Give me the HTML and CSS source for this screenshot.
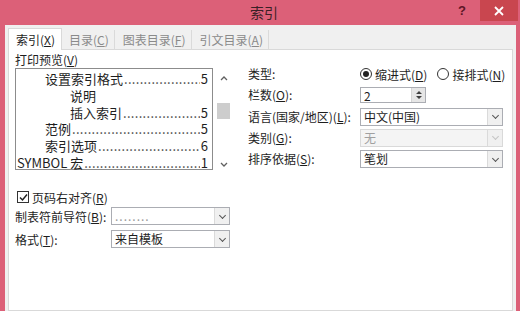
FILE: index.html
```html
<!DOCTYPE html>
<html lang="zh-CN">
<head>
    <meta charset="UTF-8">
    <title>索引</title>
    <link rel="stylesheet" href="styles.css">
</head>
<body>
    <div class="window">
        <div class="titlebar">
            <span class="caption">索引</span>
            <span class="help">?</span>
            <span class="close">
                <svg width="10" height="10" viewBox="0 0 10 10"><path d="M1 1L9 9M9 1L1 9" stroke="#fff" stroke-width="1.8"/></svg>
            </span>
        </div>
        <div class="frame">
            <div class="tabs">
                <div class="tab active">索引(<u>X</u>)</div>
                <div class="tab">目录(<u>C</u>)</div>
                <div class="tab">图表目录(<u>F</u>)</div>
                <div class="tab">引文目录(<u>A</u>)</div>
            </div>
            <div class="panel">
                <div class="top">
                    <div class="preview-col">
                        <div class="label">打印预览(<u>V</u>)</div>
                        <div class="preview">
                            <div class="list">
                                <div class="entry lvl1"><span>设置索引格式</span><span class="dots"></span><span>5</span></div>
                                <div class="entry lvl2"><span>说明</span></div>
                                <div class="entry lvl2"><span>插入索引</span><span class="dots"></span><span>5</span></div>
                                <div class="entry lvl1"><span>范例</span><span class="dots"></span><span>5</span></div>
                                <div class="entry lvl1"><span>索引选项</span><span class="dots"></span><span>6</span></div>
                                <div class="entry"><span>SYMBOL 宏</span><span class="dots"></span><span>1</span></div>
                            </div>
                            <div class="scrollbar">
                                <svg width="8" height="5" viewBox="0 0 8 5"><path d="M1 4L4 1L7 4" fill="none" stroke="#606060" stroke-width="1.3"/></svg>
                                <div class="thumb"></div>
                                <svg width="8" height="5" viewBox="0 0 8 5"><path d="M1 1L4 4L7 1" fill="none" stroke="#606060" stroke-width="1.3"/></svg>
                            </div>
                        </div>
                    </div>
                    <div class="options">
                        <div class="label">类型:</div>
                        <div class="radios">
                            <span class="radio checked"></span><span>缩进式(<u>D</u>)</span>
                            <span class="radio"></span><span>接排式(<u>N</u>)</span>
                        </div>

                        <div class="label">栏数(<u>O</u>):</div>
                        <div class="spin">
                            <span class="value">2</span>
                            <span class="spin-btn">
                                <svg width="6" height="10" viewBox="0 0 6 10"><path d="M0 4L3 1L6 4ZM0 6L3 9L6 6Z" fill="#404040"/></svg>
                            </span>
                        </div>

                        <div class="label">语言(国家/地区)(<u>L</u>):</div>
                        <div class="select"><span class="value">中文(中国)</span><span class="drop"></span></div>

                        <div class="label">类别(<u>G</u>):</div>
                        <div class="select disabled"><span class="value">无</span><span class="drop"></span></div>

                        <div class="label">排序依据(<u>S</u>):</div>
                        <div class="select"><span class="value">笔划</span><span class="drop"></span></div>
                    </div>
                </div>

                <div class="check-row">
                    <span class="checkbox">
                        <svg width="9" height="9" viewBox="0 0 9 9"><path d="M1 4.5L3.5 7L8 1.5" fill="none" stroke="#222" stroke-width="1.5"/></svg>
                    </span>
                    <span>页码右对齐(<u>R</u>)</span>
                </div>
                <div class="bottom">
                    <div class="label">制表符前导符(<u>B</u>):</div>
                    <div class="select"><span class="value leader">........</span><span class="drop"></span></div>
                    <div class="label">格式(<u>T</u>):</div>
                    <div class="select"><span class="value">来自模板</span><span class="drop"></span></div>
                </div>
            </div>
        </div>
    </div>
</body>
</html>
```

FILE: styles.css
```css
* {
    box-sizing: border-box;
}

body {
    margin: 0;
    width: 520px;
    height: 311px;
    overflow: hidden;
    font-family: "Noto Sans CJK SC", "Noto Sans", sans-serif;
    font-size: 12px;
    color: #1e1e1e;
}

u {
    text-decoration: underline;
    text-underline-offset: 1px;
}

.window {
    height: 311px;
    display: flex;
    flex-direction: column;
    background-color: #dc6078;
    padding: 0 4px 0 5px;
}

.titlebar {
    height: 25px;
    position: relative;
    flex-shrink: 0;
    color: #3a2026;
}

.caption {
    position: absolute;
    left: 245px;
    top: 3px;
    font-size: 14px;
    line-height: 18px;
    color: #3a2026;
}

.help {
    position: absolute;
    left: 453px;
    top: 3px;
    font-family: "Liberation Sans", sans-serif;
    font-weight: bold;
    font-size: 13px;
    color: #5c1526;
}

.close {
    position: absolute;
    right: -2px;
    top: 0;
    width: 38px;
    height: 21px;
    background-color: #c9464f;
    display: flex;
    align-items: center;
    justify-content: center;
}

.frame {
    flex: 1;
    background-color: #f0f0f0;
    padding: 3px 3px 0 3px;
    display: flex;
    flex-direction: column;
}

.tabs {
    display: flex;
    align-items: flex-end;
    height: 22px;
    position: relative;
    z-index: 1;
}

.tab {
    height: 20px;
    line-height: 19px;
    padding: 0 5px 0 3px;
    color: #8a8a8a;
    border-right: 1px solid #dadada;
    margin-right: 5px;
    white-space: nowrap;
}

.tab.active {
    height: 22px;
    line-height: 22px;
    background-color: #fff;
    color: #1e1e1e;
    border: 1px solid #d9d9d9;
    border-bottom: none;
    padding: 0 6px 0 7px;
    margin-right: 4px;
}

.panel {
    flex: 1;
    background-color: #fff;
    border: 1px solid #d9d9d9;
    margin-top: -1px;
    padding: 3px 0 0 6px;
}

.top {
    display: flex;
}

.preview-col .label {
    line-height: 14px;
    margin-bottom: 1px;
}

.preview {
    display: flex;
}

.list {
    width: 198px;
    height: 102px;
    border: 1px solid #8c8c8c;
    padding: 2px 4px 0 1px;
    font-size: 13px;
}

.entry {
    display: flex;
    height: 16.8px;
    line-height: 16.8px;
    white-space: nowrap;
}

.entry.lvl1 {
    padding-left: 28px;
}

.entry.lvl2 {
    padding-left: 53px;
}

.dots {
    flex: 1;
    overflow: hidden;
    margin: 0 1px;
    color: #444;
}

.dots::before {
    content: "..........................................................................";
    letter-spacing: 0.3px;
}

.scrollbar {
    width: 19px;
    height: 102px;
    display: flex;
    flex-direction: column;
    align-items: center;
    justify-content: space-between;
    padding: 8px 0 3px 2px;
}

.thumb {
    width: 13px;
    height: 16px;
    background-color: #cdcdcd;
    margin-top: -22px;
}

.options {
    margin-left: 16px;
    margin-top: 12px;
    width: 255px;
    display: grid;
    grid-template-columns: 112px 143px;
    grid-auto-rows: 18px;
    row-gap: 3.3px;
    align-items: center;
}

.options .label {
    line-height: 18px;
}

.radios {
    display: flex;
    align-items: center;
    white-space: nowrap;
}

.radio {
    flex-shrink: 0;
    width: 12px;
    height: 12px;
    border: 1px solid #333;
    border-radius: 50%;
    margin-right: 3px;
    display: flex;
    align-items: center;
    justify-content: center;
}

.radio + span {
    margin-right: 10px;
}

.radio.checked::after {
    content: "";
    width: 6px;
    height: 6px;
    border-radius: 50%;
    background-color: #222;
}

.spin {
    width: 66px;
    height: 16px;
    border: 1px solid #abadb3;
    display: flex;
    justify-content: space-between;
    align-items: center;
    padding-left: 3px;
}

.spin-btn {
    width: 14px;
    height: 14px;
    background-color: #e6e6e6;
    border-left: 1px solid #d4d4d4;
    display: flex;
    align-items: center;
    justify-content: center;
}

.select {
    height: 18px;
    border: 1px solid #abadb3;
    display: flex;
    justify-content: space-between;
    align-items: center;
    padding-left: 3px;
    background-color: #fff;
}

.select .value {
    line-height: 16px;
}

.drop {
    width: 15px;
    height: 16px;
    background-color: #f0f0f0;
    border-left: 1px solid #dadada;
    display: flex;
    align-items: center;
    justify-content: center;
}

.drop::after {
    content: "";
    width: 4px;
    height: 4px;
    border-right: 1.5px solid #555;
    border-bottom: 1.5px solid #555;
    transform: translateY(-1px) rotate(45deg);
}

.select.disabled {
    background-color: #f4f4f4;
    border-color: #d9d9d9;
    color: #a0a0a0;
}

.select.disabled .drop::after {
    border-color: #c4c4c4;
}

.check-row {
    display: flex;
    align-items: center;
    margin-top: 20px;
    margin-left: 2px;
    height: 14px;
}

.checkbox {
    flex-shrink: 0;
    width: 12px;
    height: 12px;
    border: 1px solid #333;
    margin-right: 3px;
    display: flex;
    align-items: center;
    justify-content: center;
}

.bottom {
    width: 215px;
    margin-top: 3px;
    display: grid;
    grid-template-columns: 96px 119px;
    grid-auto-rows: 18px;
    row-gap: 5px;
    align-items: center;
}

.leader {
    color: #9a9a9a;
    letter-spacing: 1px;
}
```
